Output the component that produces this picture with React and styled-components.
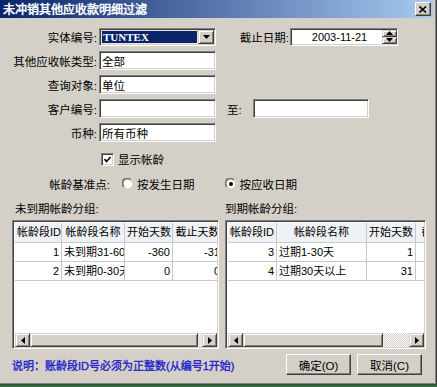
import React from "react"
import styled, { createGlobalStyle } from "styled-components"

const UI_FONT = `"Liberation Sans", "Noto Sans CJK SC", sans-serif`

const Global = createGlobalStyle`
  html, body {
    margin: 0;
    padding: 0;
    background: #2f6a3c;
  }
  body {
    font-family: ${UI_FONT};
    font-size: 11.5px;
  }
`

const Window = styled.div`
  width: 437px;
  height: 385px;
  box-sizing: border-box;
  background: #d4d0c8;
  border-right: 1px solid #404040;
  border-bottom: 1px solid #404040;
  box-shadow: inset -1px -1px #808080, inset -3px -3px #d4d0c8;
  display: flex;
  flex-direction: column;
  color: #000;
`

const TitleBar = styled.div`
  height: 18px;
  margin-right: 3px;
  display: flex;
  align-items: center;
  justify-content: space-between;
  padding: 0 2px 0 3px;
  background: linear-gradient(to right, #0a246a, #a6caf0);
`

// regular weight with a stroke keeps the CJK advance at 1em, like a faux-bold system font
const Title = styled.span`
  color: #fff;
  font-family: "Noto Sans CJK SC", sans-serif;
  font-size: 12px;
  line-height: 18px;
  -webkit-text-stroke: 0.5px #fff;
`

const CloseButton = styled.div`
  width: 16px;
  height: 14px;
  box-sizing: border-box;
  background: #d4d0c8;
  border: 1px solid;
  border-color: #fff #404040 #404040 #fff;
  box-shadow: inset -1px -1px #808080;
  display: flex;
  align-items: center;
  justify-content: center;
`

const Form = styled.div`
  padding-top: 9px;
  display: flex;
  flex-direction: column;
  gap: 5px;
`

const Row = styled.div`
  display: flex;
  align-items: center;
  height: 19px;
`

const Label = styled.span`
  width: ${(p) => p.$w || 99}px;
  box-sizing: border-box;
  padding-right: 2px;
  text-align: right;
  white-space: nowrap;
`

const SideLabel = styled.span`
  margin-left: ${(p) => p.$gap}px;
  width: ${(p) => p.$w}px;
  text-align: ${(p) => p.$align || "right"};
  white-space: nowrap;
`

const Field = styled.div`
  width: ${(p) => p.$w}px;
  height: ${(p) => p.$h || 19}px;
  margin-left: ${(p) => p.$gap || 0}px;
  box-sizing: border-box;
  background: #fff;
  border: 1px solid;
  border-color: #808080 #fff #fff #808080;
  box-shadow: inset 1px 1px #404040, inset -1px -1px #d4d0c8;
  padding: 0 ${(p) => (p.$tight ? 1 : 2)}px 0 2px;
  display: flex;
  align-items: center;
  white-space: nowrap;
  overflow: hidden;
`

const Selected = styled.div`
  flex: 1;
  height: 12px;
  margin-right: 1px;
  background: #0a246a;
  outline: 1px dotted #d4d0c8;
  color: #fff;
  font-family: "Liberation Serif", serif;
  font-weight: bold;
  font-size: 11px;
  line-height: 12px;
  padding-left: 1px;
`

const RaisedBtn = styled.div`
  width: ${(p) => p.$w}px;
  height: ${(p) => p.$h}px;
  box-sizing: border-box;
  background: #d4d0c8;
  border: 1px solid;
  border-color: #d4d0c8 #404040 #404040 #d4d0c8;
  box-shadow: inset 1px 1px #fff, inset -1px -1px #808080;
  display: flex;
  align-items: center;
  justify-content: center;
  flex-shrink: 0;
`

const DateText = styled.span`
  flex: 1;
  text-align: center;
  font-size: 11px;
  padding-left: 4px;
`

const Spinner = styled.div`
  display: flex;
  flex-direction: column;
  margin-right: -1px;
`

const CheckRow = styled.div`
  margin-top: 10px;
  padding-left: 101px;
  display: flex;
  align-items: center;
  gap: 4px;
  height: 14px;
`

const CheckBox = styled.div`
  width: 13px;
  height: 13px;
  box-sizing: border-box;
  background: #fff;
  border: 1px solid;
  border-color: #808080 #fff #fff #808080;
  box-shadow: inset 1px 1px #404040, inset -1px -1px #d4d0c8;
  display: flex;
  align-items: center;
  justify-content: center;
`

const RadioRow = styled.div`
  margin-top: 10px;
  display: flex;
  align-items: center;
  height: 16px;
`

const RadioOption = styled.label`
  display: flex;
  align-items: center;
  gap: 3px;
  margin-left: ${(p) => p.$gap}px;
  white-space: nowrap;
`

const Group = styled.div`
  margin-top: 9px;
  padding: 0 11px 0 12px;
  display: grid;
  grid-template-columns: 207px 201px;
  column-gap: 6px;
`

const GroupCol = styled.div`
  display: flex;
  flex-direction: column;
  gap: 3px;
`

const GroupLabel = styled.span`
  padding-left: ${(p) => p.$indent}px;
  line-height: 16px;
`

const GridBox = styled.div`
  height: 129px;
  box-sizing: border-box;
  border: 1px solid;
  border-color: #808080 #fff #fff #808080;
  box-shadow: inset 1px 1px #404040, inset -1px -1px #d4d0c8;
  padding: 2px 1px 1px 2px;
  display: flex;
  flex-direction: column;
  background: #fff;
`

const GridInner = styled.div`
  flex: 1;
  overflow: hidden;
  display: flex;
  flex-direction: column;
`

const GridRow = styled.div`
  display: flex;
  height: ${(p) => (p.$head ? 20 : 19)}px;
  flex-shrink: 0;
  background: ${(p) => (p.$head ? "#eef1f5" : "#fff")};
`

const Cell = styled.div`
  width: ${(p) => p.$w}px;
  flex-shrink: 0;
  box-sizing: border-box;
  border-right: 1px solid #c8c8c8;
  border-bottom: 1px solid #c8c8c8;
  padding: 0 2px;
  text-align: ${(p) => p.$align || "left"};
  white-space: nowrap;
  overflow: hidden;
  text-overflow: clip;
  font-size: 11px;
  line-height: ${(p) => (p.$head ? 19 : 18)}px;
`

const Scrollbar = styled.div`
  height: 14px;
  display: flex;
  flex-shrink: 0;
  background: repeating-conic-gradient(#d4d0c8 0 25%, #fff 0 50%) 0 0 / 2px 2px;
`

const Thumb = styled.div`
  width: ${(p) => p.$w}px;
  height: 14px;
  box-sizing: border-box;
  background: #d4d0c8;
  border: 1px solid;
  border-color: #d4d0c8 #404040 #404040 #d4d0c8;
  box-shadow: inset 1px 1px #fff, inset -1px -1px #808080;
`

const Track = styled.div`
  flex: 1;
`

const Footer = styled.div`
  margin-top: 5px;
  padding: 0 14px 0 12px;
  display: flex;
  align-items: center;
  height: 21px;
`

const Note = styled.span`
  flex: 1;
  color: #2323c8;
  font-size: 11px;
  -webkit-text-stroke: 0.35px #2323c8;
  white-space: nowrap;
`

const Button = styled.button`
  width: 65px;
  height: 21px;
  margin-left: ${(p) => p.$gap}px;
  box-sizing: border-box;
  background: #d4d0c8;
  border: 1px solid;
  border-color: #fff #404040 #404040 #fff;
  box-shadow: inset -1px -1px #808080;
  font-family: ${UI_FONT};
  font-size: 11.5px;
  padding: 0;
  color: #000;
`

const Arrow = ({ dir }) => {
  const pts = {
    down: "0,0 7,0 3.5,4",
    up: "0,4 7,4 3.5,0",
    left: "4,0 4,7 0,3.5",
    right: "0,0 0,7 4,3.5",
  }[dir]
  const vert = dir === "up" || dir === "down"
  return (
    <svg width={vert ? 7 : 4} height={vert ? 4 : 7}>
      <polygon points={pts} fill="#000" />
    </svg>
  )
}

const Radio = ({ on }) => (
  <svg width="12" height="12" viewBox="0 0 12 12">
    <path d="M1 9 A5.5 5.5 0 0 1 9 1" stroke="#808080" fill="none" />
    <path d="M2 8.5 A4.5 4.5 0 0 1 8.5 2" stroke="#404040" fill="none" />
    <circle cx="6" cy="6" r="4.2" fill="#fff" />
    {on && <circle cx="6" cy="6" r="2" fill="#000" />}
  </svg>
)

const leftCols = [
  { title: "帐龄段ID", w: 47 },
  { title: "帐龄段名称", w: 63 },
  { title: "开始天数", w: 48 },
  { title: "截止天数", w: 50 },
]
const leftRows = [
  [1, "未到期31-60天", -360, -31],
  [2, "未到期0-30天", 0, 0],
]
const rightCols = [
  { title: "帐龄段ID", w: 49 },
  { title: "帐龄段名称", w: 90 },
  { title: "开始天数", w: 49 },
  { title: "截止天数", w: 56 },
]
const rightRows = [
  [3, "过期1-30天", 1, 30],
  [4, "过期30天以上", 31, 9999],
]
const aligns = ["right", "left", "right", "right"]

const DataGrid = ({ cols, rows, thumb }) => (
  <GridBox>
    <GridInner>
      <GridRow $head>
        {cols.map((c) => (
          <Cell key={c.title} $w={c.w} $head $align="center">
            {c.title}
          </Cell>
        ))}
      </GridRow>
      {rows.map((r) => (
        <GridRow key={r[0]}>
          {r.map((v, i) => (
            <Cell key={i} $w={cols[i].w} $align={aligns[i]}>
              {v}
            </Cell>
          ))}
        </GridRow>
      ))}
    </GridInner>
    <Scrollbar>
      <RaisedBtn $w={15} $h={14}>
        <Arrow dir="left" />
      </RaisedBtn>
      <Thumb $w={thumb} />
      <Track />
      <RaisedBtn $w={15} $h={14}>
        <Arrow dir="right" />
      </RaisedBtn>
    </Scrollbar>
  </GridBox>
)

export default function App() {
  return (
    <>
      <Global />
      <Window>
        <TitleBar>
          <Title>未冲销其他应收款明细过滤</Title>
          <CloseButton>
            <svg width="8" height="7" viewBox="0 0 8 7">
              <path d="M0.5 0.5 L7 6.5 M7 0.5 L0.5 6.5" stroke="#000" strokeWidth="1.6" />
            </svg>
          </CloseButton>
        </TitleBar>

        <Form>
          <Row>
            <Label>实体编号:</Label>
            <Field $w={117} $h={18} $tight>
              <Selected>TUNTEX</Selected>
              <RaisedBtn $w={16} $h={14}>
                <Arrow dir="down" />
              </RaisedBtn>
            </Field>
            <SideLabel $gap={20} $w={53}>截止日期:</SideLabel>
            <Field $w={108} $h={18} $gap={1} $tight>
              <DateText>2003-11-21</DateText>
              <Spinner>
                <RaisedBtn $w={15} $h={7}>
                  <Arrow dir="up" />
                </RaisedBtn>
                <RaisedBtn $w={15} $h={7}>
                  <Arrow dir="down" />
                </RaisedBtn>
              </Spinner>
            </Field>
          </Row>
          <Row>
            <Label>其他应收帐类型:</Label>
            <Field $w={117}>全部</Field>
          </Row>
          <Row>
            <Label>查询对象:</Label>
            <Field $w={117}>单位</Field>
          </Row>
          <Row>
            <Label>客户编号:</Label>
            <Field $w={117} />
            <SideLabel $gap={11} $w={26} $align="left">至:</SideLabel>
            <Field $w={116} />
          </Row>
          <Row>
            <Label>币种:</Label>
            <Field $w={117}>所有币种</Field>
          </Row>
        </Form>

        <CheckRow>
          <CheckBox>
            <svg width="7" height="7" viewBox="0 0 7 7">
              <path d="M0.5 3 L2.5 5.5 L6.5 1" stroke="#000" strokeWidth="1.6" fill="none" />
            </svg>
          </CheckBox>
          <span>显示帐龄</span>
        </CheckRow>

        <RadioRow>
          <Label $w={112}>帐龄基准点:</Label>
          <RadioOption $gap={10}>
            <Radio />
            按发生日期
          </RadioOption>
          <RadioOption $gap={30}>
            <Radio on />
            按应收日期
          </RadioOption>
        </RadioRow>

        <Group>
          <GroupCol>
            <GroupLabel $indent={3}>未到期帐龄分组:</GroupLabel>
            <DataGrid cols={leftCols} rows={leftRows} thumb={168} />
          </GroupCol>
          <GroupCol>
            <GroupLabel $indent={0}>到期帐龄分组:</GroupLabel>
            <DataGrid cols={rightCols} rows={rightRows} thumb={140} />
          </GroupCol>
        </Group>

        <Footer>
          <Note>说明：账龄段ID号必须为正整数(从编号1开始)</Note>
          <Button $gap={0}>确定(O)</Button>
          <Button $gap={6}>取消(C)</Button>
        </Footer>
      </Window>
    </>
  )
}
